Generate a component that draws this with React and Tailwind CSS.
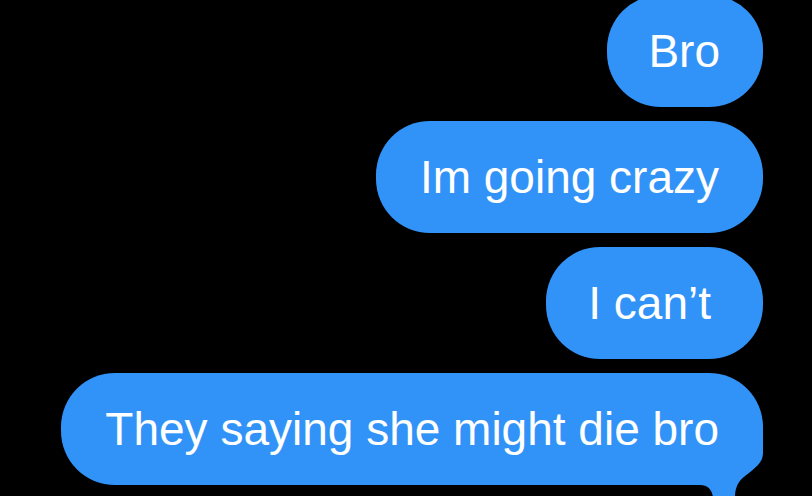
import React from "react";

const font = { fontFamily: '"Liberation Sans", Arial, sans-serif' };

function Bubble({ children, tail = false, pad = "px-[44px]" }) {
  return (
    <div
      className={`relative flex h-[112px] items-center rounded-[54px] bg-[#3193f7] text-[46px] leading-none text-white ${pad}`}
    >
      {tail && (
        <svg
          className="absolute right-0 bottom-[-12px]"
          width="63"
          height="72"
          viewBox="0 0 63 72"
        >
          <path
            d="M0 0 L63 0 L63 28 C63 38 55 43 45 51 C37 57 35 65 35 72 L13 72 C12 65 8 60 0 60 Z"
            fill="#3193f7"
          />
        </svg>
      )}
      <span className="relative whitespace-nowrap">{children}</span>
    </div>
  );
}

export default function App() {
  return (
    <div
      className="h-[496px] w-[812px] overflow-hidden bg-black"
      style={font}
    >
      <div className="mt-[-5px] flex flex-col items-end gap-[14px] pr-[49px]">
        <Bubble pad="pl-[41px] pr-[43px]">Bro</Bubble>
        <Bubble>Im going crazy</Bubble>
        <Bubble pad="pl-[42px] pr-[52px]">I can’t</Bubble>
        <Bubble tail>They saying she might die bro</Bubble>
      </div>
    </div>
  );
}
